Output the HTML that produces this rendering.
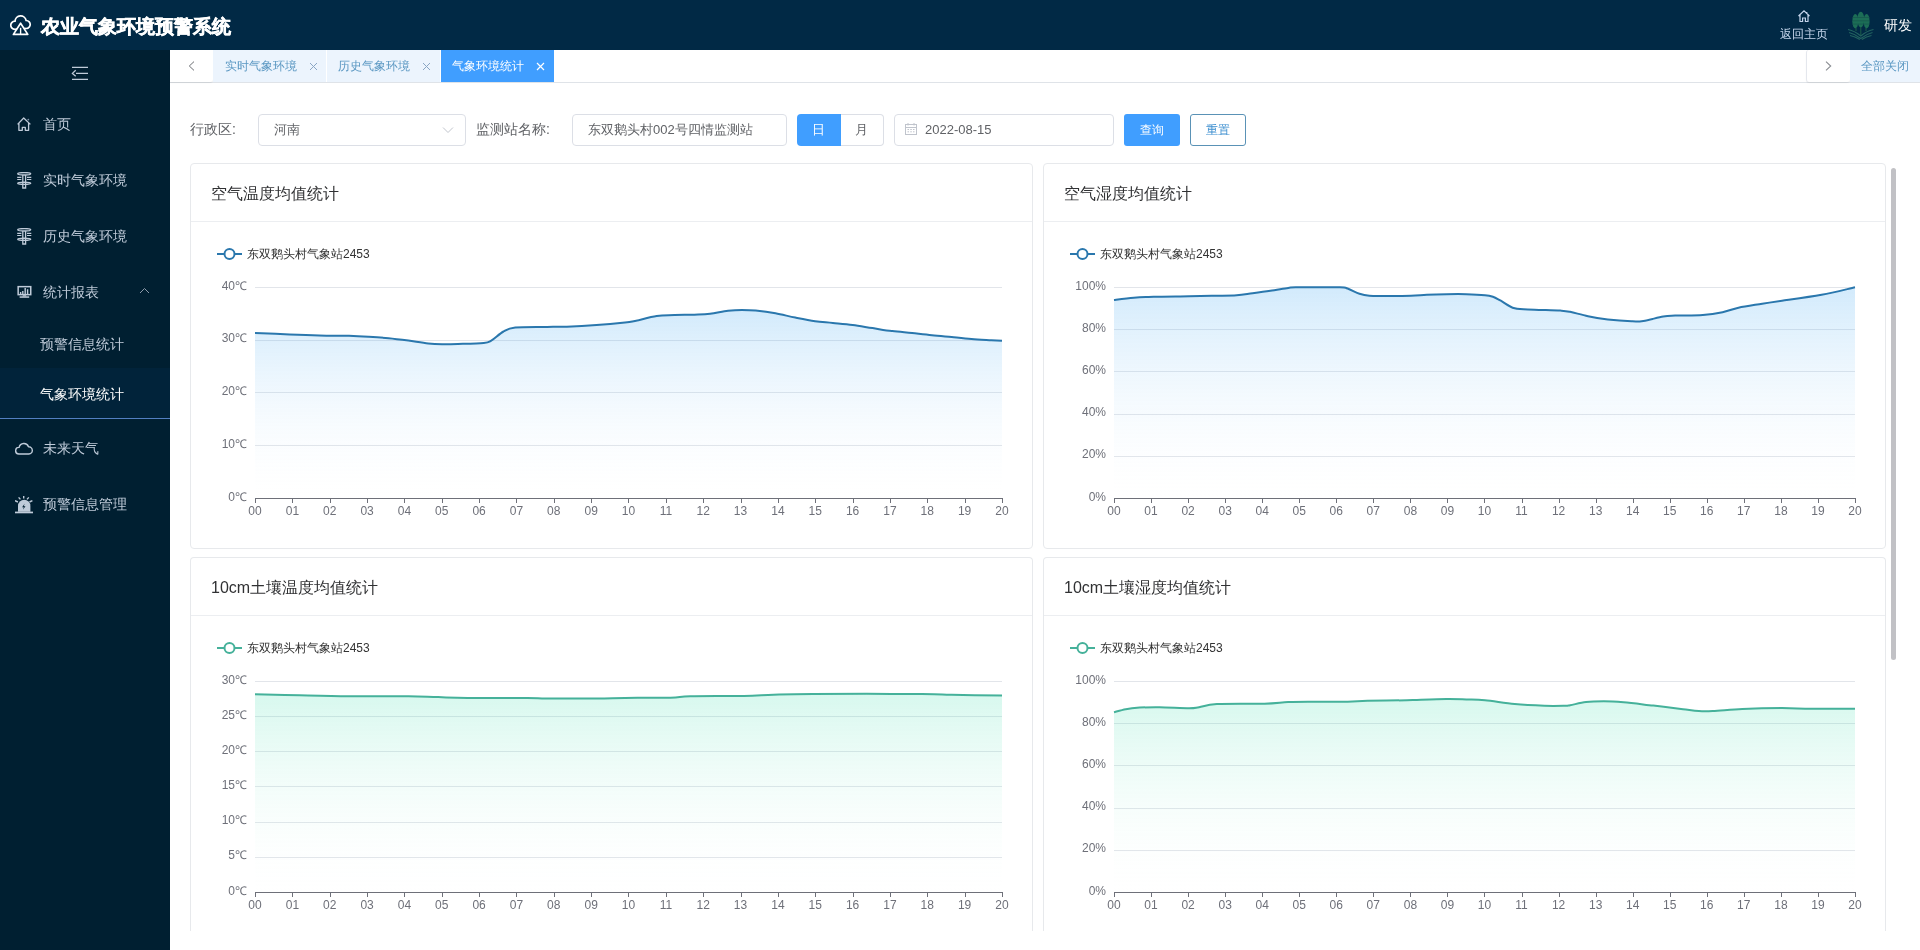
<!DOCTYPE html>
<html><head><meta charset="utf-8">
<style>
*{box-sizing:border-box;margin:0;padding:0}
html,body{width:1920px;height:950px;overflow:hidden;background:#fff;font-family:"Liberation Sans",sans-serif}
#wrap{position:absolute;left:0;top:0;width:1920px;height:950px;will-change:transform}
.abs{position:absolute}
.t{position:absolute;white-space:nowrap;line-height:1}
#hdr{position:absolute;left:0;top:0;width:1920px;height:50px;background:#012945}
#side{position:absolute;left:0;top:50px;width:170px;height:900px;background:#001f31}
#tabs{position:absolute;left:170px;top:50px;width:1750px;height:33px;background:#fff;border-bottom:1px solid #dfe3e8}
.tab{position:absolute;top:0;height:32px;background:#ecf4fd;color:#5a97c2;font-size:12px}
.card{position:absolute;background:#fff;border:1px solid #e7e9ec;border-radius:4px}
.card .hd{position:absolute;left:0;top:57px;width:100%;height:1px;background:#eceef1}
.inp{position:absolute;top:114px;height:32px;border:1px solid #dcdfe6;border-radius:4px;background:#fff}
svg text{font-family:"Liberation Sans",sans-serif}
.yl{font-size:12px;fill:#6e7079}
.xl{font-size:12px;fill:#6e7079}
.lg{font-size:12px;fill:#333}
.mi{color:#bfcbd9;font-size:14px}
</style></head><body><div id="wrap">
<div id="hdr">
  <svg class="abs" style="left:10px;top:15px" width="22" height="21" viewBox="0 0 22 21">
    <path d="M6.3 14.15 A4.1 4.1 0 1 1 5.01 6.21 A5.6 5.6 0 0 1 16.12 5.5 A4 4 0 1 1 14.83 13.26" fill="none" stroke="#fff" stroke-width="1.7" stroke-linecap="round"/>
    <path d="M3.4 19.4 L10.6 8.2 L17.8 19.4 Z" fill="none" stroke="#fff" stroke-width="1.7" stroke-linejoin="round"/>
    <line x1="10.6" y1="12.8" x2="10.6" y2="19.2" stroke="#fff" stroke-width="1.4"/>
  </svg>
  <div class="t" style="left:41px;top:17px;font-size:19px;font-weight:bold;color:#fff;-webkit-text-stroke:0.5px #fff">农业气象环境预警系统</div>
  <svg class="abs" style="left:1797px;top:9px" width="14" height="14" viewBox="0 0 14 14">
    <path d="M1.5 7 L7 1.8 L12.5 7 M3 5.8 V12.5 H5.6 V9 H8.4 V12.5 H11 V5.8 M9.8 3 V4.6" fill="none" stroke="#c4d3ea" stroke-width="1.2"/>
  </svg>
  <div class="t" style="left:1780px;top:28px;font-size:12px;color:#c9d9ef">返回主页</div>
  <svg class="abs" style="left:1846px;top:8px" width="32" height="32" viewBox="0 0 32 32">
    <g fill="#1c6e56">
      <ellipse cx="9.3" cy="13.2" rx="3" ry="7.2"/>
      <ellipse cx="14.8" cy="11.6" rx="3.5" ry="7.8"/>
      <ellipse cx="20.6" cy="13.2" rx="3" ry="7.2"/>
    </g>
    <g stroke="#14494a" stroke-width="0.6" opacity="0.8">
      <path d="M6 9.5 H24 M6 12.8 H24 M6 16.1 H24"/>
    </g>
    <g fill="none" stroke="#22625f" stroke-width="1.1">
      <path d="M2 21.5 Q9 23 14.8 28 Q20.5 23 27.5 21.5"/>
      <path d="M3 24.5 Q9 26 14.8 30.5 Q20.5 26 26.5 24.5"/>
      <path d="M4 27.5 Q9 28.5 13.8 31.5 M15.8 31.5 Q20.5 28.5 25.5 27.5"/>
      <path d="M10 20 V23 M14.8 19 V27 M20 20 V23" stroke="#1b5a48"/>
    </g>
  </svg>
  <div class="t" style="left:1884px;top:18px;font-size:14px;color:#fff">研发</div>
</div>

<div id="side">
  <svg class="abs" style="left:71px;top:16px" width="18" height="15" viewBox="0 0 18 15">
    <path d="M1 1.4 H17 M5 7.4 H17 M1 13.3 H17 M4.7 4.2 L1.4 7.4 L4.7 10.3" fill="none" stroke="#bfcbd9" stroke-width="1.3"/>
  </svg>
  <!-- 首页 -->
  <svg class="abs" style="left:17px;top:67px" width="15" height="15" viewBox="0 0 15 15">
    <path d="M0.6 7.4 L6.7 1 L13.4 7.4 M1.9 6 V13.3 H5.3 V10.3 H8.3 V13.3 H11.6 V6" fill="none" stroke="#bfcbd9" stroke-width="1.3" stroke-linejoin="round"/>
    <circle cx="11.3" cy="2.6" r="0.9" fill="#7f93aa"/>
  </svg>
  <div class="t mi" style="left:43px;top:67px">首页</div>
  <!-- 实时 -->
  <svg class="abs" style="left:17px;top:122px" width="15" height="17" viewBox="0 0 15 17">
    <ellipse cx="7.2" cy="1.8" rx="6.5" ry="1.2" fill="none" stroke="#bfcbd9" stroke-width="1.4"/>
    <ellipse cx="7.2" cy="11.3" rx="6.5" ry="1.1" fill="none" stroke="#bfcbd9" stroke-width="1.4"/>
    <path d="M0.2 5.4 H4.4 M0.2 7.5 H4.4 M10 5.4 H14.3 M10 7.5 H14.3" stroke="#bfcbd9" stroke-width="1.1"/>
    <path d="M5.8 3 V16 H8.6 V3" fill="none" stroke="#bfcbd9" stroke-width="1.3"/>
  </svg>
  <div class="t mi" style="left:43px;top:123px">实时气象环境</div>
  <svg class="abs" style="left:17px;top:178px" width="15" height="17" viewBox="0 0 15 17">
    <ellipse cx="7.2" cy="1.8" rx="6.5" ry="1.2" fill="none" stroke="#bfcbd9" stroke-width="1.4"/>
    <ellipse cx="7.2" cy="11.3" rx="6.5" ry="1.1" fill="none" stroke="#bfcbd9" stroke-width="1.4"/>
    <path d="M0.2 5.4 H4.4 M0.2 7.5 H4.4 M10 5.4 H14.3 M10 7.5 H14.3" stroke="#bfcbd9" stroke-width="1.1"/>
    <path d="M5.8 3 V16 H8.6 V3" fill="none" stroke="#bfcbd9" stroke-width="1.3"/>
  </svg>
  <div class="t mi" style="left:43px;top:179px">历史气象环境</div>
  <!-- 统计报表 -->
  <svg class="abs" style="left:17px;top:235px" width="15" height="14" viewBox="0 0 15 14">
    <rect x="1.15" y="1.65" width="12.6" height="8" fill="none" stroke="#bfcbd9" stroke-width="1.5"/>
    <path d="M3.6 8.9 V7.1 M5.8 8.9 V5.9 M8.2 8.9 V3.1 M10.6 8.9 V4.3" stroke="#bfcbd9" stroke-width="1.4"/>
    <path d="M5.8 10.2 H9 L9.4 11.4 H5.4 Z" fill="#bfcbd9"/>
    <rect x="2.6" y="11.3" width="9.6" height="1.5" fill="#bfcbd9"/>
  </svg>
  <div class="t mi" style="left:43px;top:235px">统计报表</div>
  <svg class="abs" style="left:139px;top:237px" width="11" height="7" viewBox="0 0 11 7">
    <path d="M1 6 L5.5 1.5 L10 6" fill="none" stroke="#8e9bab" stroke-width="1"/>
  </svg>
  <div class="t mi" style="left:40px;top:287px">预警信息统计</div>
  <div class="abs" style="left:0;top:318px;width:170px;height:50px;background:#01233a"></div>
  <div class="abs" style="left:0;top:368px;width:170px;height:1px;background:#527fc2"></div>
  <div class="t mi" style="left:40px;top:337px;color:#fff">气象环境统计</div>
  <!-- 未来天气 -->
  <svg class="abs" style="left:15px;top:391px" width="18" height="15" viewBox="0 0 18 15">
    <path d="M3.8 13 A3.3 3.3 0 0 1 4.1 6.4 A4.9 4.9 0 0 1 13.5 5.8 A3.6 3.6 0 0 1 13.9 13 Z" fill="none" stroke="#bfcbd9" stroke-width="1.4" stroke-linejoin="round"/>
  </svg>
  <div class="t mi" style="left:43px;top:391px">未来天气</div>
  <!-- 预警信息管理 -->
  <svg class="abs" style="left:15px;top:446px" width="18" height="18" viewBox="0 0 18 18">
    <path d="M3 15.8 V9.9 A6.2 6.2 0 0 1 15.4 9.9 V15.8 Z" fill="#bfcbd9"/>
    <rect x="0" y="15.6" width="18" height="1.7" fill="#bfcbd9"/>
    <path d="M9.6 7.8 L7.1 11.2 H8.8 L7.9 13.8 L10.5 10.2 H8.8 Z" fill="#001f31"/>
    <path d="M8.7 0 V2.6 M3.6 1.4 L5.4 3.4 M13.8 1.4 L12 3.4 M0 4.6 L2.9 6 M17.4 4.6 L14.5 6" stroke="#bfcbd9" stroke-width="1.4"/>
  </svg>
  <div class="t mi" style="left:43px;top:447px">预警信息管理</div>
</div>

<div id="tabs">
  <div class="abs" style="left:0;top:0;width:43px;height:32px;background:#fff;border-radius:0 0 3px 0;box-shadow:0 1px 1px rgba(0,0,0,0.08)"></div>
  <svg class="abs" style="left:18px;top:11px" width="8" height="11" viewBox="0 0 8 11"><path d="M6 0.6 L1.3 5 L6 9.4" fill="none" stroke="#6b6e73" stroke-width="1"/></svg>
  <div class="tab" style="left:43px;width:113px">
    <div class="t" style="left:12px;top:10px">实时气象环境</div>
    <svg class="abs" style="left:96px;top:12px" width="9" height="9" viewBox="0 0 9 9"><path d="M1 1 L8 8 M8 1 L1 8" stroke="#8aa6c4" stroke-width="1"/></svg>
  </div>
  <div class="tab" style="left:157px;width:113px">
    <div class="t" style="left:11px;top:10px">历史气象环境</div>
    <svg class="abs" style="left:95px;top:12px" width="9" height="9" viewBox="0 0 9 9"><path d="M1 1 L8 8 M8 1 L1 8" stroke="#8aa6c4" stroke-width="1"/></svg>
  </div>
  <div class="tab" style="left:271px;width:113px;background:#409eff;color:#fff">
    <div class="t" style="left:11px;top:10px">气象环境统计</div>
    <svg class="abs" style="left:95px;top:12px" width="9" height="9" viewBox="0 0 9 9"><path d="M1 1 L8 8 M8 1 L1 8" stroke="#fff" stroke-width="1.2"/></svg>
  </div>
  <div class="abs" style="left:1636px;top:0;width:44px;height:32px;background:#fff;border-left:1px solid #e4e7ed;border-radius:3px;box-shadow:0 1px 1px rgba(0,0,0,0.08)"></div>
  <svg class="abs" style="left:1654px;top:11px" width="8" height="11" viewBox="0 0 8 11"><path d="M2 0.6 L6.7 5 L2 9.4" fill="none" stroke="#8a8d92" stroke-width="1.1"/></svg>
  <div class="tab" style="left:1680px;width:70px">
    <div class="t" style="left:11px;top:10px">全部关闭</div>
  </div>
</div>

<!-- filters -->
<div class="t" style="left:190px;top:122px;font-size:14px;color:#606266">行政区:</div>
<div class="inp" style="left:258px;width:208px"></div>
<div class="t" style="left:274px;top:123px;font-size:13px;color:#606266">河南</div>
<svg class="abs" style="left:442px;top:126px" width="12" height="8" viewBox="0 0 12 8"><path d="M1 1.5 L6 6.5 L11 1.5" fill="none" stroke="#c0c4cc" stroke-width="1"/></svg>
<div class="t" style="left:476px;top:122px;font-size:14px;color:#606266">监测站名称:</div>
<div class="inp" style="left:572px;width:215px"></div>
<div class="t" style="left:588px;top:123px;font-size:13px;color:#606266">东双鹅头村002号四情监测站</div>
<div class="abs" style="left:797px;top:114px;width:44px;height:32px;background:#409eff;border-radius:4px 0 0 4px"></div>
<div class="t" style="left:812px;top:123px;font-size:13px;color:#fff">日</div>
<div class="abs" style="left:841px;top:114px;width:43px;height:32px;border:1px solid #dcdfe6;border-left:none;border-radius:0 4px 4px 0"></div>
<div class="t" style="left:855px;top:123px;font-size:13px;color:#606266">月</div>
<div class="inp" style="left:894px;width:220px"></div>
<svg class="abs" style="left:905px;top:123px" width="12" height="12" viewBox="0 0 12 12"><rect x="0.5" y="1.5" width="11" height="10" fill="none" stroke="#c0c4cc" stroke-width="1"/><path d="M0.5 4.5 H11.5 M3 0 V2.5 M9 0 V2.5 M2.5 6.5 H4 M5.3 6.5 H6.8 M8 6.5 H9.5 M2.5 8.8 H4 M5.3 8.8 H6.8 M8 8.8 H9.5" stroke="#c0c4cc" stroke-width="1"/></svg>
<div class="t" style="left:925px;top:123px;font-size:13px;color:#606266">2022-08-15</div>
<div class="abs" style="left:1124px;top:114px;width:56px;height:32px;background:#409eff;border-radius:3px"></div>
<div class="t" style="left:1140px;top:124px;font-size:12px;color:#fff">查询</div>
<div class="abs" style="left:1190px;top:114px;width:56px;height:32px;background:#fff;border:1px solid #5a92b6;border-radius:3px"></div>
<div class="t" style="left:1206px;top:124px;font-size:12px;color:#3d8fd0">重置</div>

<!-- cards -->
<div class="card" style="left:190px;top:163px;width:843px;height:386px"><div class="hd"></div>
  <div class="t" style="left:20px;top:22px;font-size:16px;color:#303133">空气温度均值统计</div></div>
<div class="card" style="left:1043px;top:163px;width:843px;height:386px"><div class="hd"></div>
  <div class="t" style="left:20px;top:22px;font-size:16px;color:#303133">空气湿度均值统计</div></div>
<div class="card" style="left:190px;top:557px;width:843px;height:386px;border-bottom:none;border-radius:4px 4px 0 0"><div class="hd"></div>
  <div class="t" style="left:20px;top:22px;font-size:16px;color:#303133">10cm土壤温度均值统计</div></div>
<div class="card" style="left:1043px;top:557px;width:843px;height:386px;border-bottom:none;border-radius:4px 4px 0 0"><div class="hd"></div>
  <div class="t" style="left:20px;top:22px;font-size:16px;color:#303133">10cm土壤湿度均值统计</div></div>
<div class="abs" style="left:170px;top:931px;width:1750px;height:19px;background:#fff"></div>

<svg class="abs" style="left:0;top:0;will-change:transform" width="1920" height="950" viewBox="0 0 1920 950">
<defs>
<linearGradient id="gc1" x1="0" y1="0" x2="0" y2="1"><stop offset="0" stop-color="rgb(50,160,240)" stop-opacity="0.22"/><stop offset="1" stop-color="#ffffff" stop-opacity="0.02"/></linearGradient>
<linearGradient id="gc2" x1="0" y1="0" x2="0" y2="1"><stop offset="0" stop-color="rgb(50,160,240)" stop-opacity="0.22"/><stop offset="1" stop-color="#ffffff" stop-opacity="0.02"/></linearGradient>
<linearGradient id="gc3" x1="0" y1="0" x2="0" y2="1"><stop offset="0" stop-color="rgb(55,220,170)" stop-opacity="0.2"/><stop offset="1" stop-color="#ffffff" stop-opacity="0.02"/></linearGradient>
<linearGradient id="gc4" x1="0" y1="0" x2="0" y2="1"><stop offset="0" stop-color="rgb(55,220,170)" stop-opacity="0.2"/><stop offset="1" stop-color="#ffffff" stop-opacity="0.02"/></linearGradient>
</defs>
<line x1="255" y1="287.5" x2="1002" y2="287.5" stroke="#e2e5ea" stroke-width="1"/>
<text x="247" y="289.5" text-anchor="end" class="yl">40℃</text>
<line x1="255" y1="340.5" x2="1002" y2="340.5" stroke="#e2e5ea" stroke-width="1"/>
<text x="247" y="342.2" text-anchor="end" class="yl">30℃</text>
<line x1="255" y1="392.5" x2="1002" y2="392.5" stroke="#e2e5ea" stroke-width="1"/>
<text x="247" y="395.0" text-anchor="end" class="yl">20℃</text>
<line x1="255" y1="445.5" x2="1002" y2="445.5" stroke="#e2e5ea" stroke-width="1"/>
<text x="247" y="447.8" text-anchor="end" class="yl">10℃</text>
<text x="247" y="500.5" text-anchor="end" class="yl">0℃</text>
<path d="M255.0 332.9 C260.8 333.1 278.9 334.0 289.6 334.5 C300.3 334.9 309.4 335.2 319.3 335.4 C329.2 335.7 340.8 335.6 349.0 335.8 C357.3 336.1 362.2 336.4 368.8 336.8 C375.4 337.2 382.0 337.6 388.6 338.2 C395.2 338.8 401.8 339.7 408.4 340.6 C415.0 341.5 422.6 342.8 428.2 343.4 C433.8 344.0 437.1 344.1 442.1 344.2 C447.0 344.3 451.0 344.2 457.9 344.0 C464.9 343.8 478.1 343.6 483.7 343.0 C489.3 342.4 488.3 342.3 491.6 340.4 C494.9 338.5 499.5 333.6 503.5 331.5 C507.4 329.3 508.1 328.3 515.3 327.5 C522.6 326.8 538.4 327.1 547.0 326.9 C555.6 326.8 558.6 327.0 566.8 326.7 C575.1 326.4 586.8 325.8 596.5 325.1 C606.2 324.5 618.6 323.3 625.0 322.6 C631.4 321.9 629.6 322.1 634.9 321.0 C640.2 319.9 650.1 317.0 656.7 316.0 C663.3 315.0 668.2 315.3 674.5 315.0 C680.8 314.8 688.4 314.9 694.3 314.7 C700.2 314.4 704.5 314.3 710.1 313.7 C715.8 313.0 722.7 311.3 728.0 310.7 C733.3 310.1 737.2 309.9 741.8 309.9 C746.5 309.9 750.1 309.9 755.7 310.5 C761.3 311.1 768.9 312.1 775.5 313.3 C782.1 314.5 788.7 316.3 795.3 317.6 C801.9 318.9 808.8 320.3 815.1 321.2 C821.4 322.1 826.7 322.3 832.9 323.0 C839.2 323.6 846.1 324.1 852.7 325.0 C859.3 325.8 865.9 327.1 872.5 328.1 C879.1 329.1 885.7 330.3 892.3 331.1 C898.9 331.9 905.5 332.4 912.1 333.1 C918.7 333.8 925.3 334.6 931.9 335.2 C938.5 335.9 945.1 336.4 951.7 337.0 C958.3 337.7 964.9 338.5 971.5 339.0 C978.1 339.5 986.3 339.9 991.3 340.2 C996.4 340.5 1000.2 340.7 1002.0 340.8 L1002 498 L255 498 Z" fill="url(#gc1)"/>
<path d="M255.0 332.9 C260.8 333.1 278.9 334.0 289.6 334.5 C300.3 334.9 309.4 335.2 319.3 335.4 C329.2 335.7 340.8 335.6 349.0 335.8 C357.3 336.1 362.2 336.4 368.8 336.8 C375.4 337.2 382.0 337.6 388.6 338.2 C395.2 338.8 401.8 339.7 408.4 340.6 C415.0 341.5 422.6 342.8 428.2 343.4 C433.8 344.0 437.1 344.1 442.1 344.2 C447.0 344.3 451.0 344.2 457.9 344.0 C464.9 343.8 478.1 343.6 483.7 343.0 C489.3 342.4 488.3 342.3 491.6 340.4 C494.9 338.5 499.5 333.6 503.5 331.5 C507.4 329.3 508.1 328.3 515.3 327.5 C522.6 326.8 538.4 327.1 547.0 326.9 C555.6 326.8 558.6 327.0 566.8 326.7 C575.1 326.4 586.8 325.8 596.5 325.1 C606.2 324.5 618.6 323.3 625.0 322.6 C631.4 321.9 629.6 322.1 634.9 321.0 C640.2 319.9 650.1 317.0 656.7 316.0 C663.3 315.0 668.2 315.3 674.5 315.0 C680.8 314.8 688.4 314.9 694.3 314.7 C700.2 314.4 704.5 314.3 710.1 313.7 C715.8 313.0 722.7 311.3 728.0 310.7 C733.3 310.1 737.2 309.9 741.8 309.9 C746.5 309.9 750.1 309.9 755.7 310.5 C761.3 311.1 768.9 312.1 775.5 313.3 C782.1 314.5 788.7 316.3 795.3 317.6 C801.9 318.9 808.8 320.3 815.1 321.2 C821.4 322.1 826.7 322.3 832.9 323.0 C839.2 323.6 846.1 324.1 852.7 325.0 C859.3 325.8 865.9 327.1 872.5 328.1 C879.1 329.1 885.7 330.3 892.3 331.1 C898.9 331.9 905.5 332.4 912.1 333.1 C918.7 333.8 925.3 334.6 931.9 335.2 C938.5 335.9 945.1 336.4 951.7 337.0 C958.3 337.7 964.9 338.5 971.5 339.0 C978.1 339.5 986.3 339.9 991.3 340.2 C996.4 340.5 1000.2 340.7 1002.0 340.8" fill="none" stroke="#2a77ad" stroke-width="2"/>
<line x1="255" y1="498.5" x2="1002" y2="498.5" stroke="#6e7079" stroke-width="1"/>
<line x1="255.5" y1="498.0" x2="255.5" y2="503.0" stroke="#6e7079" stroke-width="1"/>
<text x="255.0" y="515.0" text-anchor="middle" class="xl">00</text>
<line x1="292.5" y1="498.0" x2="292.5" y2="503.0" stroke="#6e7079" stroke-width="1"/>
<text x="292.4" y="515.0" text-anchor="middle" class="xl">01</text>
<line x1="330.5" y1="498.0" x2="330.5" y2="503.0" stroke="#6e7079" stroke-width="1"/>
<text x="329.7" y="515.0" text-anchor="middle" class="xl">02</text>
<line x1="367.5" y1="498.0" x2="367.5" y2="503.0" stroke="#6e7079" stroke-width="1"/>
<text x="367.1" y="515.0" text-anchor="middle" class="xl">03</text>
<line x1="404.5" y1="498.0" x2="404.5" y2="503.0" stroke="#6e7079" stroke-width="1"/>
<text x="404.4" y="515.0" text-anchor="middle" class="xl">04</text>
<line x1="442.5" y1="498.0" x2="442.5" y2="503.0" stroke="#6e7079" stroke-width="1"/>
<text x="441.8" y="515.0" text-anchor="middle" class="xl">05</text>
<line x1="479.5" y1="498.0" x2="479.5" y2="503.0" stroke="#6e7079" stroke-width="1"/>
<text x="479.1" y="515.0" text-anchor="middle" class="xl">06</text>
<line x1="516.5" y1="498.0" x2="516.5" y2="503.0" stroke="#6e7079" stroke-width="1"/>
<text x="516.5" y="515.0" text-anchor="middle" class="xl">07</text>
<line x1="554.5" y1="498.0" x2="554.5" y2="503.0" stroke="#6e7079" stroke-width="1"/>
<text x="553.8" y="515.0" text-anchor="middle" class="xl">08</text>
<line x1="591.5" y1="498.0" x2="591.5" y2="503.0" stroke="#6e7079" stroke-width="1"/>
<text x="591.2" y="515.0" text-anchor="middle" class="xl">09</text>
<line x1="628.5" y1="498.0" x2="628.5" y2="503.0" stroke="#6e7079" stroke-width="1"/>
<text x="628.5" y="515.0" text-anchor="middle" class="xl">10</text>
<line x1="666.5" y1="498.0" x2="666.5" y2="503.0" stroke="#6e7079" stroke-width="1"/>
<text x="665.9" y="515.0" text-anchor="middle" class="xl">11</text>
<line x1="703.5" y1="498.0" x2="703.5" y2="503.0" stroke="#6e7079" stroke-width="1"/>
<text x="703.2" y="515.0" text-anchor="middle" class="xl">12</text>
<line x1="741.5" y1="498.0" x2="741.5" y2="503.0" stroke="#6e7079" stroke-width="1"/>
<text x="740.5" y="515.0" text-anchor="middle" class="xl">13</text>
<line x1="778.5" y1="498.0" x2="778.5" y2="503.0" stroke="#6e7079" stroke-width="1"/>
<text x="777.9" y="515.0" text-anchor="middle" class="xl">14</text>
<line x1="815.5" y1="498.0" x2="815.5" y2="503.0" stroke="#6e7079" stroke-width="1"/>
<text x="815.2" y="515.0" text-anchor="middle" class="xl">15</text>
<line x1="853.5" y1="498.0" x2="853.5" y2="503.0" stroke="#6e7079" stroke-width="1"/>
<text x="852.6" y="515.0" text-anchor="middle" class="xl">16</text>
<line x1="890.5" y1="498.0" x2="890.5" y2="503.0" stroke="#6e7079" stroke-width="1"/>
<text x="890.0" y="515.0" text-anchor="middle" class="xl">17</text>
<line x1="927.5" y1="498.0" x2="927.5" y2="503.0" stroke="#6e7079" stroke-width="1"/>
<text x="927.3" y="515.0" text-anchor="middle" class="xl">18</text>
<line x1="965.5" y1="498.0" x2="965.5" y2="503.0" stroke="#6e7079" stroke-width="1"/>
<text x="964.6" y="515.0" text-anchor="middle" class="xl">19</text>
<line x1="1002.5" y1="498.0" x2="1002.5" y2="503.0" stroke="#6e7079" stroke-width="1"/>
<text x="1002.0" y="515.0" text-anchor="middle" class="xl">20</text>
<line x1="217" y1="254.0" x2="242" y2="254.0" stroke="#2a77ad" stroke-width="2"/>
<circle cx="229.5" cy="254.0" r="5" fill="#fff" stroke="#2a77ad" stroke-width="2"/>
<text x="247" y="257.5" class="lg">东双鹅头村气象站2453</text>
<line x1="1114" y1="287.5" x2="1855" y2="287.5" stroke="#e2e5ea" stroke-width="1"/>
<text x="1106" y="289.5" text-anchor="end" class="yl">100%</text>
<line x1="1114" y1="329.5" x2="1855" y2="329.5" stroke="#e2e5ea" stroke-width="1"/>
<text x="1106" y="331.7" text-anchor="end" class="yl">80%</text>
<line x1="1114" y1="371.5" x2="1855" y2="371.5" stroke="#e2e5ea" stroke-width="1"/>
<text x="1106" y="373.9" text-anchor="end" class="yl">60%</text>
<line x1="1114" y1="414.5" x2="1855" y2="414.5" stroke="#e2e5ea" stroke-width="1"/>
<text x="1106" y="416.1" text-anchor="end" class="yl">40%</text>
<line x1="1114" y1="456.5" x2="1855" y2="456.5" stroke="#e2e5ea" stroke-width="1"/>
<text x="1106" y="458.3" text-anchor="end" class="yl">20%</text>
<text x="1106" y="500.5" text-anchor="end" class="yl">0%</text>
<path d="M1114.0 300.0 C1117.3 299.6 1127.2 298.3 1133.8 297.8 C1140.4 297.2 1144.3 297.0 1153.6 296.8 C1162.8 296.5 1179.0 296.4 1189.2 296.2 C1199.4 296.0 1207.0 296.0 1215.0 295.8 C1222.9 295.6 1230.5 295.6 1236.7 295.2 C1243.0 294.8 1247.0 293.9 1252.6 293.2 C1258.2 292.5 1264.5 291.7 1270.4 290.8 C1276.3 290.0 1283.6 288.5 1288.2 287.9 C1292.8 287.3 1289.5 287.4 1298.1 287.3 C1306.7 287.2 1331.5 287.1 1339.7 287.3 C1348.0 287.5 1344.3 287.4 1347.6 288.5 C1350.9 289.6 1355.9 292.6 1359.5 293.8 C1363.1 295.0 1364.8 295.4 1369.4 295.8 C1374.0 296.2 1380.3 296.0 1387.2 296.0 C1394.2 296.0 1404.4 296.0 1411.0 295.8 C1417.6 295.6 1420.9 295.1 1426.8 294.8 C1432.8 294.5 1440.0 294.3 1446.6 294.2 C1453.2 294.1 1460.0 294.0 1466.4 294.2 C1472.8 294.4 1480.6 294.8 1485.0 295.2 C1489.4 295.6 1490.3 295.9 1492.9 296.8 C1495.6 297.7 1497.2 298.8 1500.8 300.7 C1504.5 302.7 1509.1 306.8 1514.7 308.3 C1520.3 309.8 1526.9 309.3 1534.5 309.7 C1542.1 310.0 1554.3 310.3 1560.2 310.6 C1566.2 311.0 1565.5 310.9 1570.1 311.8 C1574.8 312.8 1581.7 314.9 1588.0 316.2 C1594.2 317.5 1600.5 318.7 1607.8 319.6 C1615.0 320.4 1625.6 321.1 1631.5 321.3 C1637.5 321.6 1638.1 321.7 1643.4 320.9 C1648.7 320.1 1657.9 317.5 1663.2 316.6 C1668.5 315.7 1668.5 315.9 1675.1 315.6 C1681.7 315.3 1694.9 315.6 1702.8 315.0 C1710.7 314.4 1716.7 313.4 1722.6 312.2 C1728.6 311.0 1731.9 309.1 1738.5 307.7 C1745.1 306.3 1755.0 304.9 1762.2 303.7 C1769.5 302.6 1772.1 302.2 1782.0 300.7 C1791.9 299.3 1809.5 297.0 1821.6 294.8 C1833.8 292.6 1849.4 288.5 1855.0 287.3 L1855 498 L1114 498 Z" fill="url(#gc2)"/>
<path d="M1114.0 300.0 C1117.3 299.6 1127.2 298.3 1133.8 297.8 C1140.4 297.2 1144.3 297.0 1153.6 296.8 C1162.8 296.5 1179.0 296.4 1189.2 296.2 C1199.4 296.0 1207.0 296.0 1215.0 295.8 C1222.9 295.6 1230.5 295.6 1236.7 295.2 C1243.0 294.8 1247.0 293.9 1252.6 293.2 C1258.2 292.5 1264.5 291.7 1270.4 290.8 C1276.3 290.0 1283.6 288.5 1288.2 287.9 C1292.8 287.3 1289.5 287.4 1298.1 287.3 C1306.7 287.2 1331.5 287.1 1339.7 287.3 C1348.0 287.5 1344.3 287.4 1347.6 288.5 C1350.9 289.6 1355.9 292.6 1359.5 293.8 C1363.1 295.0 1364.8 295.4 1369.4 295.8 C1374.0 296.2 1380.3 296.0 1387.2 296.0 C1394.2 296.0 1404.4 296.0 1411.0 295.8 C1417.6 295.6 1420.9 295.1 1426.8 294.8 C1432.8 294.5 1440.0 294.3 1446.6 294.2 C1453.2 294.1 1460.0 294.0 1466.4 294.2 C1472.8 294.4 1480.6 294.8 1485.0 295.2 C1489.4 295.6 1490.3 295.9 1492.9 296.8 C1495.6 297.7 1497.2 298.8 1500.8 300.7 C1504.5 302.7 1509.1 306.8 1514.7 308.3 C1520.3 309.8 1526.9 309.3 1534.5 309.7 C1542.1 310.0 1554.3 310.3 1560.2 310.6 C1566.2 311.0 1565.5 310.9 1570.1 311.8 C1574.8 312.8 1581.7 314.9 1588.0 316.2 C1594.2 317.5 1600.5 318.7 1607.8 319.6 C1615.0 320.4 1625.6 321.1 1631.5 321.3 C1637.5 321.6 1638.1 321.7 1643.4 320.9 C1648.7 320.1 1657.9 317.5 1663.2 316.6 C1668.5 315.7 1668.5 315.9 1675.1 315.6 C1681.7 315.3 1694.9 315.6 1702.8 315.0 C1710.7 314.4 1716.7 313.4 1722.6 312.2 C1728.6 311.0 1731.9 309.1 1738.5 307.7 C1745.1 306.3 1755.0 304.9 1762.2 303.7 C1769.5 302.6 1772.1 302.2 1782.0 300.7 C1791.9 299.3 1809.5 297.0 1821.6 294.8 C1833.8 292.6 1849.4 288.5 1855.0 287.3" fill="none" stroke="#2a77ad" stroke-width="2"/>
<line x1="1114" y1="498.5" x2="1855" y2="498.5" stroke="#6e7079" stroke-width="1"/>
<line x1="1114.5" y1="498.0" x2="1114.5" y2="503.0" stroke="#6e7079" stroke-width="1"/>
<text x="1114.0" y="515.0" text-anchor="middle" class="xl">00</text>
<line x1="1151.5" y1="498.0" x2="1151.5" y2="503.0" stroke="#6e7079" stroke-width="1"/>
<text x="1151.0" y="515.0" text-anchor="middle" class="xl">01</text>
<line x1="1188.5" y1="498.0" x2="1188.5" y2="503.0" stroke="#6e7079" stroke-width="1"/>
<text x="1188.1" y="515.0" text-anchor="middle" class="xl">02</text>
<line x1="1225.5" y1="498.0" x2="1225.5" y2="503.0" stroke="#6e7079" stroke-width="1"/>
<text x="1225.2" y="515.0" text-anchor="middle" class="xl">03</text>
<line x1="1262.5" y1="498.0" x2="1262.5" y2="503.0" stroke="#6e7079" stroke-width="1"/>
<text x="1262.2" y="515.0" text-anchor="middle" class="xl">04</text>
<line x1="1299.5" y1="498.0" x2="1299.5" y2="503.0" stroke="#6e7079" stroke-width="1"/>
<text x="1299.2" y="515.0" text-anchor="middle" class="xl">05</text>
<line x1="1336.5" y1="498.0" x2="1336.5" y2="503.0" stroke="#6e7079" stroke-width="1"/>
<text x="1336.3" y="515.0" text-anchor="middle" class="xl">06</text>
<line x1="1373.5" y1="498.0" x2="1373.5" y2="503.0" stroke="#6e7079" stroke-width="1"/>
<text x="1373.3" y="515.0" text-anchor="middle" class="xl">07</text>
<line x1="1410.5" y1="498.0" x2="1410.5" y2="503.0" stroke="#6e7079" stroke-width="1"/>
<text x="1410.4" y="515.0" text-anchor="middle" class="xl">08</text>
<line x1="1447.5" y1="498.0" x2="1447.5" y2="503.0" stroke="#6e7079" stroke-width="1"/>
<text x="1447.5" y="515.0" text-anchor="middle" class="xl">09</text>
<line x1="1484.5" y1="498.0" x2="1484.5" y2="503.0" stroke="#6e7079" stroke-width="1"/>
<text x="1484.5" y="515.0" text-anchor="middle" class="xl">10</text>
<line x1="1522.5" y1="498.0" x2="1522.5" y2="503.0" stroke="#6e7079" stroke-width="1"/>
<text x="1521.5" y="515.0" text-anchor="middle" class="xl">11</text>
<line x1="1559.5" y1="498.0" x2="1559.5" y2="503.0" stroke="#6e7079" stroke-width="1"/>
<text x="1558.6" y="515.0" text-anchor="middle" class="xl">12</text>
<line x1="1596.5" y1="498.0" x2="1596.5" y2="503.0" stroke="#6e7079" stroke-width="1"/>
<text x="1595.7" y="515.0" text-anchor="middle" class="xl">13</text>
<line x1="1633.5" y1="498.0" x2="1633.5" y2="503.0" stroke="#6e7079" stroke-width="1"/>
<text x="1632.7" y="515.0" text-anchor="middle" class="xl">14</text>
<line x1="1670.5" y1="498.0" x2="1670.5" y2="503.0" stroke="#6e7079" stroke-width="1"/>
<text x="1669.8" y="515.0" text-anchor="middle" class="xl">15</text>
<line x1="1707.5" y1="498.0" x2="1707.5" y2="503.0" stroke="#6e7079" stroke-width="1"/>
<text x="1706.8" y="515.0" text-anchor="middle" class="xl">16</text>
<line x1="1744.5" y1="498.0" x2="1744.5" y2="503.0" stroke="#6e7079" stroke-width="1"/>
<text x="1743.8" y="515.0" text-anchor="middle" class="xl">17</text>
<line x1="1781.5" y1="498.0" x2="1781.5" y2="503.0" stroke="#6e7079" stroke-width="1"/>
<text x="1780.9" y="515.0" text-anchor="middle" class="xl">18</text>
<line x1="1818.5" y1="498.0" x2="1818.5" y2="503.0" stroke="#6e7079" stroke-width="1"/>
<text x="1817.9" y="515.0" text-anchor="middle" class="xl">19</text>
<line x1="1855.5" y1="498.0" x2="1855.5" y2="503.0" stroke="#6e7079" stroke-width="1"/>
<text x="1855.0" y="515.0" text-anchor="middle" class="xl">20</text>
<line x1="1070" y1="254.0" x2="1095" y2="254.0" stroke="#2a77ad" stroke-width="2"/>
<circle cx="1082.5" cy="254.0" r="5" fill="#fff" stroke="#2a77ad" stroke-width="2"/>
<text x="1100" y="257.5" class="lg">东双鹅头村气象站2453</text>
<line x1="255" y1="681.5" x2="1002" y2="681.5" stroke="#e2e5ea" stroke-width="1"/>
<text x="247" y="683.5" text-anchor="end" class="yl">30℃</text>
<line x1="255" y1="716.5" x2="1002" y2="716.5" stroke="#e2e5ea" stroke-width="1"/>
<text x="247" y="718.7" text-anchor="end" class="yl">25℃</text>
<line x1="255" y1="751.5" x2="1002" y2="751.5" stroke="#e2e5ea" stroke-width="1"/>
<text x="247" y="753.8" text-anchor="end" class="yl">20℃</text>
<line x1="255" y1="786.5" x2="1002" y2="786.5" stroke="#e2e5ea" stroke-width="1"/>
<text x="247" y="789.0" text-anchor="end" class="yl">15℃</text>
<line x1="255" y1="822.5" x2="1002" y2="822.5" stroke="#e2e5ea" stroke-width="1"/>
<text x="247" y="824.2" text-anchor="end" class="yl">10℃</text>
<line x1="255" y1="857.5" x2="1002" y2="857.5" stroke="#e2e5ea" stroke-width="1"/>
<text x="247" y="859.3" text-anchor="end" class="yl">5℃</text>
<text x="247" y="894.5" text-anchor="end" class="yl">0℃</text>
<path d="M255.0 694.2 C262.4 694.4 283.8 695.0 299.5 695.3 C315.2 695.7 330.9 696.2 349.0 696.3 C367.2 696.5 393.6 696.2 408.4 696.3 C423.3 696.5 428.2 696.9 438.1 697.1 C448.0 697.4 453.0 697.8 467.8 697.9 C482.7 698.1 514.0 697.8 527.2 697.9 C540.4 698.0 535.5 698.4 547.0 698.5 C558.6 698.6 583.5 698.6 596.5 698.5 C609.5 698.4 612.7 698.1 625.0 697.9 C637.3 697.8 659.7 698.0 670.5 697.7 C681.4 697.5 678.1 696.6 690.3 696.3 C702.6 696.0 730.0 696.2 743.8 695.9 C757.7 695.7 762.0 695.1 773.5 694.8 C785.1 694.4 788.4 694.1 813.1 694.0 C837.9 693.8 898.9 693.8 922.0 694.0 C945.1 694.1 938.4 694.5 951.7 694.8 C965.1 695.0 993.6 695.4 1002.0 695.5 L1002 892 L255 892 Z" fill="url(#gc3)"/>
<path d="M255.0 694.2 C262.4 694.4 283.8 695.0 299.5 695.3 C315.2 695.7 330.9 696.2 349.0 696.3 C367.2 696.5 393.6 696.2 408.4 696.3 C423.3 696.5 428.2 696.9 438.1 697.1 C448.0 697.4 453.0 697.8 467.8 697.9 C482.7 698.1 514.0 697.8 527.2 697.9 C540.4 698.0 535.5 698.4 547.0 698.5 C558.6 698.6 583.5 698.6 596.5 698.5 C609.5 698.4 612.7 698.1 625.0 697.9 C637.3 697.8 659.7 698.0 670.5 697.7 C681.4 697.5 678.1 696.6 690.3 696.3 C702.6 696.0 730.0 696.2 743.8 695.9 C757.7 695.7 762.0 695.1 773.5 694.8 C785.1 694.4 788.4 694.1 813.1 694.0 C837.9 693.8 898.9 693.8 922.0 694.0 C945.1 694.1 938.4 694.5 951.7 694.8 C965.1 695.0 993.6 695.4 1002.0 695.5" fill="none" stroke="#45b19a" stroke-width="2"/>
<line x1="255" y1="892.5" x2="1002" y2="892.5" stroke="#6e7079" stroke-width="1"/>
<line x1="255.5" y1="892.0" x2="255.5" y2="897.0" stroke="#6e7079" stroke-width="1"/>
<text x="255.0" y="909.0" text-anchor="middle" class="xl">00</text>
<line x1="292.5" y1="892.0" x2="292.5" y2="897.0" stroke="#6e7079" stroke-width="1"/>
<text x="292.4" y="909.0" text-anchor="middle" class="xl">01</text>
<line x1="330.5" y1="892.0" x2="330.5" y2="897.0" stroke="#6e7079" stroke-width="1"/>
<text x="329.7" y="909.0" text-anchor="middle" class="xl">02</text>
<line x1="367.5" y1="892.0" x2="367.5" y2="897.0" stroke="#6e7079" stroke-width="1"/>
<text x="367.1" y="909.0" text-anchor="middle" class="xl">03</text>
<line x1="404.5" y1="892.0" x2="404.5" y2="897.0" stroke="#6e7079" stroke-width="1"/>
<text x="404.4" y="909.0" text-anchor="middle" class="xl">04</text>
<line x1="442.5" y1="892.0" x2="442.5" y2="897.0" stroke="#6e7079" stroke-width="1"/>
<text x="441.8" y="909.0" text-anchor="middle" class="xl">05</text>
<line x1="479.5" y1="892.0" x2="479.5" y2="897.0" stroke="#6e7079" stroke-width="1"/>
<text x="479.1" y="909.0" text-anchor="middle" class="xl">06</text>
<line x1="516.5" y1="892.0" x2="516.5" y2="897.0" stroke="#6e7079" stroke-width="1"/>
<text x="516.5" y="909.0" text-anchor="middle" class="xl">07</text>
<line x1="554.5" y1="892.0" x2="554.5" y2="897.0" stroke="#6e7079" stroke-width="1"/>
<text x="553.8" y="909.0" text-anchor="middle" class="xl">08</text>
<line x1="591.5" y1="892.0" x2="591.5" y2="897.0" stroke="#6e7079" stroke-width="1"/>
<text x="591.2" y="909.0" text-anchor="middle" class="xl">09</text>
<line x1="628.5" y1="892.0" x2="628.5" y2="897.0" stroke="#6e7079" stroke-width="1"/>
<text x="628.5" y="909.0" text-anchor="middle" class="xl">10</text>
<line x1="666.5" y1="892.0" x2="666.5" y2="897.0" stroke="#6e7079" stroke-width="1"/>
<text x="665.9" y="909.0" text-anchor="middle" class="xl">11</text>
<line x1="703.5" y1="892.0" x2="703.5" y2="897.0" stroke="#6e7079" stroke-width="1"/>
<text x="703.2" y="909.0" text-anchor="middle" class="xl">12</text>
<line x1="741.5" y1="892.0" x2="741.5" y2="897.0" stroke="#6e7079" stroke-width="1"/>
<text x="740.5" y="909.0" text-anchor="middle" class="xl">13</text>
<line x1="778.5" y1="892.0" x2="778.5" y2="897.0" stroke="#6e7079" stroke-width="1"/>
<text x="777.9" y="909.0" text-anchor="middle" class="xl">14</text>
<line x1="815.5" y1="892.0" x2="815.5" y2="897.0" stroke="#6e7079" stroke-width="1"/>
<text x="815.2" y="909.0" text-anchor="middle" class="xl">15</text>
<line x1="853.5" y1="892.0" x2="853.5" y2="897.0" stroke="#6e7079" stroke-width="1"/>
<text x="852.6" y="909.0" text-anchor="middle" class="xl">16</text>
<line x1="890.5" y1="892.0" x2="890.5" y2="897.0" stroke="#6e7079" stroke-width="1"/>
<text x="890.0" y="909.0" text-anchor="middle" class="xl">17</text>
<line x1="927.5" y1="892.0" x2="927.5" y2="897.0" stroke="#6e7079" stroke-width="1"/>
<text x="927.3" y="909.0" text-anchor="middle" class="xl">18</text>
<line x1="965.5" y1="892.0" x2="965.5" y2="897.0" stroke="#6e7079" stroke-width="1"/>
<text x="964.6" y="909.0" text-anchor="middle" class="xl">19</text>
<line x1="1002.5" y1="892.0" x2="1002.5" y2="897.0" stroke="#6e7079" stroke-width="1"/>
<text x="1002.0" y="909.0" text-anchor="middle" class="xl">20</text>
<line x1="217" y1="648.0" x2="242" y2="648.0" stroke="#45b19a" stroke-width="2"/>
<circle cx="229.5" cy="648.0" r="5" fill="#fff" stroke="#45b19a" stroke-width="2"/>
<text x="247" y="651.5" class="lg">东双鹅头村气象站2453</text>
<line x1="1114" y1="681.5" x2="1855" y2="681.5" stroke="#e2e5ea" stroke-width="1"/>
<text x="1106" y="683.5" text-anchor="end" class="yl">100%</text>
<line x1="1114" y1="723.5" x2="1855" y2="723.5" stroke="#e2e5ea" stroke-width="1"/>
<text x="1106" y="725.7" text-anchor="end" class="yl">80%</text>
<line x1="1114" y1="765.5" x2="1855" y2="765.5" stroke="#e2e5ea" stroke-width="1"/>
<text x="1106" y="767.9" text-anchor="end" class="yl">60%</text>
<line x1="1114" y1="808.5" x2="1855" y2="808.5" stroke="#e2e5ea" stroke-width="1"/>
<text x="1106" y="810.1" text-anchor="end" class="yl">40%</text>
<line x1="1114" y1="850.5" x2="1855" y2="850.5" stroke="#e2e5ea" stroke-width="1"/>
<text x="1106" y="852.3" text-anchor="end" class="yl">20%</text>
<text x="1106" y="894.5" text-anchor="end" class="yl">0%</text>
<path d="M1114.0 712.2 C1116.0 711.7 1121.6 710.0 1125.8 709.2 C1130.1 708.4 1134.1 708.0 1139.7 707.6 C1145.3 707.3 1151.3 707.1 1159.5 707.2 C1167.8 707.3 1182.6 708.2 1189.2 708.2 C1195.8 708.2 1194.5 707.9 1199.1 707.2 C1203.7 706.5 1206.0 704.7 1216.9 704.1 C1227.8 703.5 1252.6 704.0 1264.5 703.7 C1276.3 703.3 1281.0 702.4 1288.2 702.1 C1295.5 701.7 1298.1 701.7 1308.0 701.7 C1317.9 701.6 1337.7 701.8 1347.6 701.7 C1357.5 701.5 1357.5 700.9 1367.4 700.7 C1377.3 700.5 1398.8 700.4 1407.0 700.3 C1415.3 700.2 1410.3 700.1 1416.9 699.9 C1423.5 699.7 1438.4 699.2 1446.6 699.1 C1454.9 699.0 1460.0 699.3 1466.4 699.5 C1472.8 699.7 1477.0 699.5 1485.0 700.3 C1493.0 701.1 1504.8 703.1 1514.7 704.1 C1524.6 705.0 1536.2 705.5 1544.4 705.8 C1552.7 706.1 1559.9 705.9 1564.2 705.8 C1568.5 705.7 1566.5 705.9 1570.1 705.2 C1573.8 704.6 1580.4 702.7 1586.0 702.1 C1591.6 701.4 1597.5 701.3 1603.8 701.3 C1610.1 701.3 1615.4 701.6 1623.6 702.3 C1631.9 703.0 1643.4 704.5 1653.3 705.6 C1663.2 706.8 1675.4 708.3 1683.0 709.2 C1690.6 710.1 1693.9 710.7 1698.9 711.0 C1703.8 711.3 1705.5 711.3 1712.7 711.0 C1720.0 710.7 1730.9 709.5 1742.4 709.0 C1754.0 708.5 1770.5 708.1 1782.0 708.0 C1793.6 708.0 1799.6 708.7 1811.7 708.8 C1823.9 708.9 1847.8 708.8 1855.0 708.8 L1855 892 L1114 892 Z" fill="url(#gc4)"/>
<path d="M1114.0 712.2 C1116.0 711.7 1121.6 710.0 1125.8 709.2 C1130.1 708.4 1134.1 708.0 1139.7 707.6 C1145.3 707.3 1151.3 707.1 1159.5 707.2 C1167.8 707.3 1182.6 708.2 1189.2 708.2 C1195.8 708.2 1194.5 707.9 1199.1 707.2 C1203.7 706.5 1206.0 704.7 1216.9 704.1 C1227.8 703.5 1252.6 704.0 1264.5 703.7 C1276.3 703.3 1281.0 702.4 1288.2 702.1 C1295.5 701.7 1298.1 701.7 1308.0 701.7 C1317.9 701.6 1337.7 701.8 1347.6 701.7 C1357.5 701.5 1357.5 700.9 1367.4 700.7 C1377.3 700.5 1398.8 700.4 1407.0 700.3 C1415.3 700.2 1410.3 700.1 1416.9 699.9 C1423.5 699.7 1438.4 699.2 1446.6 699.1 C1454.9 699.0 1460.0 699.3 1466.4 699.5 C1472.8 699.7 1477.0 699.5 1485.0 700.3 C1493.0 701.1 1504.8 703.1 1514.7 704.1 C1524.6 705.0 1536.2 705.5 1544.4 705.8 C1552.7 706.1 1559.9 705.9 1564.2 705.8 C1568.5 705.7 1566.5 705.9 1570.1 705.2 C1573.8 704.6 1580.4 702.7 1586.0 702.1 C1591.6 701.4 1597.5 701.3 1603.8 701.3 C1610.1 701.3 1615.4 701.6 1623.6 702.3 C1631.9 703.0 1643.4 704.5 1653.3 705.6 C1663.2 706.8 1675.4 708.3 1683.0 709.2 C1690.6 710.1 1693.9 710.7 1698.9 711.0 C1703.8 711.3 1705.5 711.3 1712.7 711.0 C1720.0 710.7 1730.9 709.5 1742.4 709.0 C1754.0 708.5 1770.5 708.1 1782.0 708.0 C1793.6 708.0 1799.6 708.7 1811.7 708.8 C1823.9 708.9 1847.8 708.8 1855.0 708.8" fill="none" stroke="#45b19a" stroke-width="2"/>
<line x1="1114" y1="892.5" x2="1855" y2="892.5" stroke="#6e7079" stroke-width="1"/>
<line x1="1114.5" y1="892.0" x2="1114.5" y2="897.0" stroke="#6e7079" stroke-width="1"/>
<text x="1114.0" y="909.0" text-anchor="middle" class="xl">00</text>
<line x1="1151.5" y1="892.0" x2="1151.5" y2="897.0" stroke="#6e7079" stroke-width="1"/>
<text x="1151.0" y="909.0" text-anchor="middle" class="xl">01</text>
<line x1="1188.5" y1="892.0" x2="1188.5" y2="897.0" stroke="#6e7079" stroke-width="1"/>
<text x="1188.1" y="909.0" text-anchor="middle" class="xl">02</text>
<line x1="1225.5" y1="892.0" x2="1225.5" y2="897.0" stroke="#6e7079" stroke-width="1"/>
<text x="1225.2" y="909.0" text-anchor="middle" class="xl">03</text>
<line x1="1262.5" y1="892.0" x2="1262.5" y2="897.0" stroke="#6e7079" stroke-width="1"/>
<text x="1262.2" y="909.0" text-anchor="middle" class="xl">04</text>
<line x1="1299.5" y1="892.0" x2="1299.5" y2="897.0" stroke="#6e7079" stroke-width="1"/>
<text x="1299.2" y="909.0" text-anchor="middle" class="xl">05</text>
<line x1="1336.5" y1="892.0" x2="1336.5" y2="897.0" stroke="#6e7079" stroke-width="1"/>
<text x="1336.3" y="909.0" text-anchor="middle" class="xl">06</text>
<line x1="1373.5" y1="892.0" x2="1373.5" y2="897.0" stroke="#6e7079" stroke-width="1"/>
<text x="1373.3" y="909.0" text-anchor="middle" class="xl">07</text>
<line x1="1410.5" y1="892.0" x2="1410.5" y2="897.0" stroke="#6e7079" stroke-width="1"/>
<text x="1410.4" y="909.0" text-anchor="middle" class="xl">08</text>
<line x1="1447.5" y1="892.0" x2="1447.5" y2="897.0" stroke="#6e7079" stroke-width="1"/>
<text x="1447.5" y="909.0" text-anchor="middle" class="xl">09</text>
<line x1="1484.5" y1="892.0" x2="1484.5" y2="897.0" stroke="#6e7079" stroke-width="1"/>
<text x="1484.5" y="909.0" text-anchor="middle" class="xl">10</text>
<line x1="1522.5" y1="892.0" x2="1522.5" y2="897.0" stroke="#6e7079" stroke-width="1"/>
<text x="1521.5" y="909.0" text-anchor="middle" class="xl">11</text>
<line x1="1559.5" y1="892.0" x2="1559.5" y2="897.0" stroke="#6e7079" stroke-width="1"/>
<text x="1558.6" y="909.0" text-anchor="middle" class="xl">12</text>
<line x1="1596.5" y1="892.0" x2="1596.5" y2="897.0" stroke="#6e7079" stroke-width="1"/>
<text x="1595.7" y="909.0" text-anchor="middle" class="xl">13</text>
<line x1="1633.5" y1="892.0" x2="1633.5" y2="897.0" stroke="#6e7079" stroke-width="1"/>
<text x="1632.7" y="909.0" text-anchor="middle" class="xl">14</text>
<line x1="1670.5" y1="892.0" x2="1670.5" y2="897.0" stroke="#6e7079" stroke-width="1"/>
<text x="1669.8" y="909.0" text-anchor="middle" class="xl">15</text>
<line x1="1707.5" y1="892.0" x2="1707.5" y2="897.0" stroke="#6e7079" stroke-width="1"/>
<text x="1706.8" y="909.0" text-anchor="middle" class="xl">16</text>
<line x1="1744.5" y1="892.0" x2="1744.5" y2="897.0" stroke="#6e7079" stroke-width="1"/>
<text x="1743.8" y="909.0" text-anchor="middle" class="xl">17</text>
<line x1="1781.5" y1="892.0" x2="1781.5" y2="897.0" stroke="#6e7079" stroke-width="1"/>
<text x="1780.9" y="909.0" text-anchor="middle" class="xl">18</text>
<line x1="1818.5" y1="892.0" x2="1818.5" y2="897.0" stroke="#6e7079" stroke-width="1"/>
<text x="1817.9" y="909.0" text-anchor="middle" class="xl">19</text>
<line x1="1855.5" y1="892.0" x2="1855.5" y2="897.0" stroke="#6e7079" stroke-width="1"/>
<text x="1855.0" y="909.0" text-anchor="middle" class="xl">20</text>
<line x1="1070" y1="648.0" x2="1095" y2="648.0" stroke="#45b19a" stroke-width="2"/>
<circle cx="1082.5" cy="648.0" r="5" fill="#fff" stroke="#45b19a" stroke-width="2"/>
<text x="1100" y="651.5" class="lg">东双鹅头村气象站2453</text>
</svg>
<div class="abs" style="left:1891px;top:168px;width:5px;height:492px;background:#c1c1c5;border-radius:3px"></div>
</div></body></html>
